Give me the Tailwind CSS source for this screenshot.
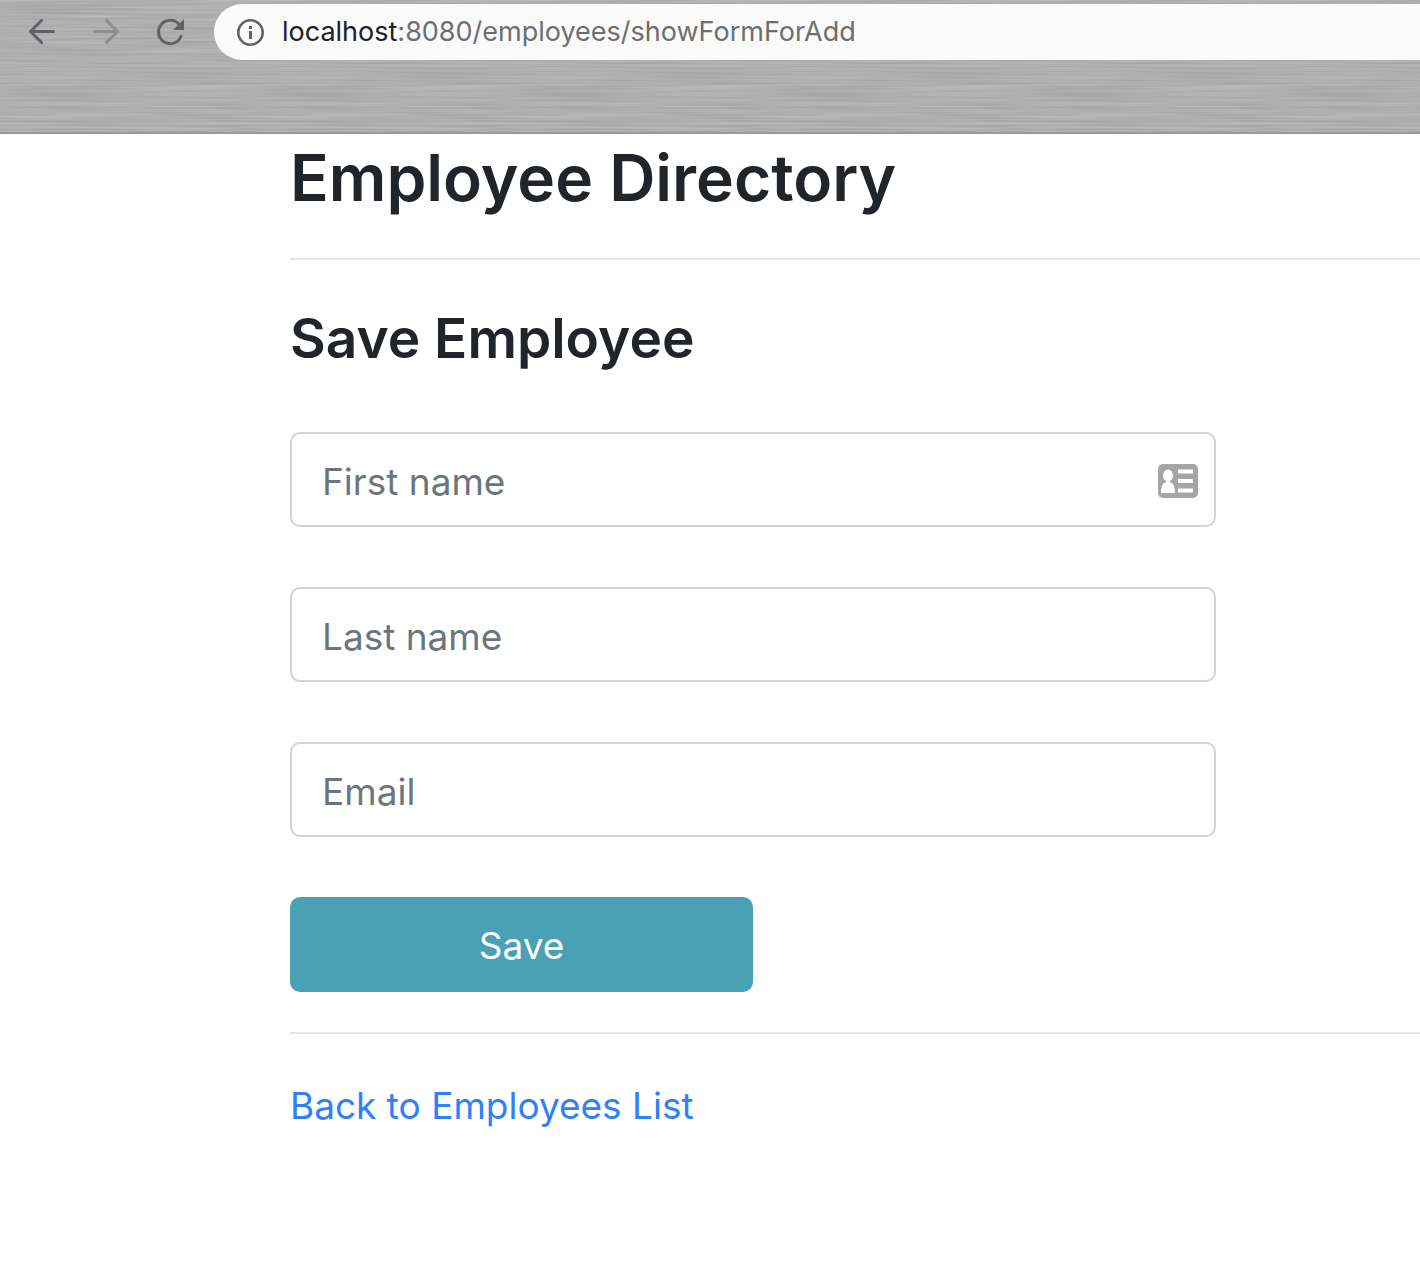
<!DOCTYPE html>
<html lang="en">
<head>
<meta charset="utf-8">
<meta name="viewport" content="width=device-width, initial-scale=1">
<title>Save Employee</title>
<script src="https://cdn.jsdelivr.net/npm/@tailwindcss/browser@4"></script>
</head>
<body class="min-h-screen bg-white font-[Inter,sans-serif] text-[#212529]">
  <header class="relative h-[134px] overflow-hidden border-b-2 border-[#999999] bg-[#afafaf]">
    <!-- Brushed metal texture, repeated every 256px -->
    <svg class="absolute inset-0 h-full w-full" aria-hidden="true">
      <defs>
        <filter id="brushed" x="0" y="0" width="100%" height="100%" color-interpolation-filters="sRGB">
          <feTurbulence type="fractalNoise" baseFrequency="0.008 0.45" numOctaves="2" seed="4" stitchTiles="stitch"/>
          <feColorMatrix values="0.14 0 0 0 0.615  0.14 0 0 0 0.615  0.14 0 0 0 0.615  0 0 0 0 1"/>
        </filter>
        <pattern id="metal" width="256" height="134" patternUnits="userSpaceOnUse">
          <rect width="256" height="134" filter="url(#brushed)"/>
        </pattern>
      </defs>
      <rect width="100%" height="100%" fill="url(#metal)"/>
    </svg>
    <nav class="relative flex items-center pt-1 pl-6" aria-label="Browser">
      <button type="button" aria-label="Back" class="mr-7 text-[#5f6368]">
        <svg class="size-9" viewBox="0 0 36 36" fill="none" stroke="currentColor" stroke-width="3" stroke-linecap="round" stroke-linejoin="round"><path d="M29.500 17.500H6.500M17.500 6.500L6.500 17.500l11 11"/></svg>
      </button>
      <button type="button" aria-label="Forward" disabled class="mr-7 text-[#8b8d8f]">
        <svg class="size-9" viewBox="0 0 36 36" fill="none" stroke="currentColor" stroke-width="3" stroke-linecap="round" stroke-linejoin="round"><path d="M6.500 17.500h23M18.500 6.500l11 11-11 11"/></svg>
      </button>
      <button type="button" aria-label="Reload" class="mr-[26px] text-[#5f6368]">
        <svg class="size-9" viewBox="0 0 36 36" fill="none"><path d="M29 22.500A11.700 11.700 0 1 1 26.800 10" stroke="currentColor" stroke-width="3" stroke-linecap="round"/><path d="M32 5v11H21z" fill="currentColor"/></svg>
      </button>
      <div class="flex h-14 flex-1 items-center rounded-l-full bg-[#fafafa] pl-[22px]">
        <button type="button" aria-label="Site information" class="mr-[18px] text-[#5f6368]">
          <svg class="size-[28px]" viewBox="0 0 28 28" fill="none"><circle cx="14.500" cy="14.500" r="12.200" stroke="currentColor" stroke-width="2.600"/><path d="M13 8h3v3h-3zM13 13h3v8h-3z" fill="currentColor"/></svg>
        </button>
        <span class="text-[27px] leading-8 whitespace-nowrap text-[#6e6e6e]"><span class="text-[#202124]">localhost</span>:8080/employees/showFormForAdd</span>
      </div>
    </nav>
  </header>

  <main class="pl-[290px]">
    <h1 class="pt-1 text-[64px] leading-[80px] font-semibold">Employee Directory</h1>
    <hr class="mt-10 border-t-2 border-[#e5e5e5]">
    <h2 class="mt-10 text-[55px] leading-[76px] font-semibold">Save Employee</h2>
    <form class="mt-14 max-w-[926px]" onsubmit="return false">
      <div class="relative mb-[60px]">
        <input type="text" aria-label="First name" placeholder="First name" class="block h-[95px] w-full rounded-[10px] border-2 border-[#ced4da] px-[30px] pt-1 text-[37px] placeholder:text-[#6c757d] placeholder:opacity-100">
        <svg class="absolute top-[31px] right-[18px] h-9 w-10" viewBox="0 0 40 36" aria-hidden="true"><rect y="1" width="40" height="34" rx="5" fill="#a5a5a5"/><g fill="#fff"><ellipse cx="10" cy="12.500" rx="5" ry="6"/><path d="M8 17h4v2c3 1 5 4 5 11H3c0-7 2-10 5-11zM20 6.500h15v4H20zM20 16h15v4H20zM20 25.500h15v4H20z"/></g></svg>
      </div>
      <input type="text" aria-label="Last name" placeholder="Last name" class="mb-[60px] block h-[95px] w-full rounded-[10px] border-2 border-[#ced4da] px-[30px] pt-1 text-[37px] placeholder:text-[#6c757d] placeholder:opacity-100">
      <input type="email" aria-label="Email" placeholder="Email" class="mb-[60px] block h-[95px] w-full rounded-[10px] border-2 border-[#ced4da] px-[30px] pt-1 text-[37px] placeholder:text-[#6c757d] placeholder:opacity-100">
      <button type="submit" class="block h-[95px] w-1/2 rounded-[10px] bg-[#4aa0b5] pt-0.5 text-[37px] text-white">Save</button>
    </form>
    <hr class="mt-10 border-t-2 border-[#e5e5e5]">
    <a href="#" class="mt-[42px] inline-block text-[37px] leading-[60px] text-[#2f80f9]">Back to Employees List</a>
  </main>
</body>
</html>
